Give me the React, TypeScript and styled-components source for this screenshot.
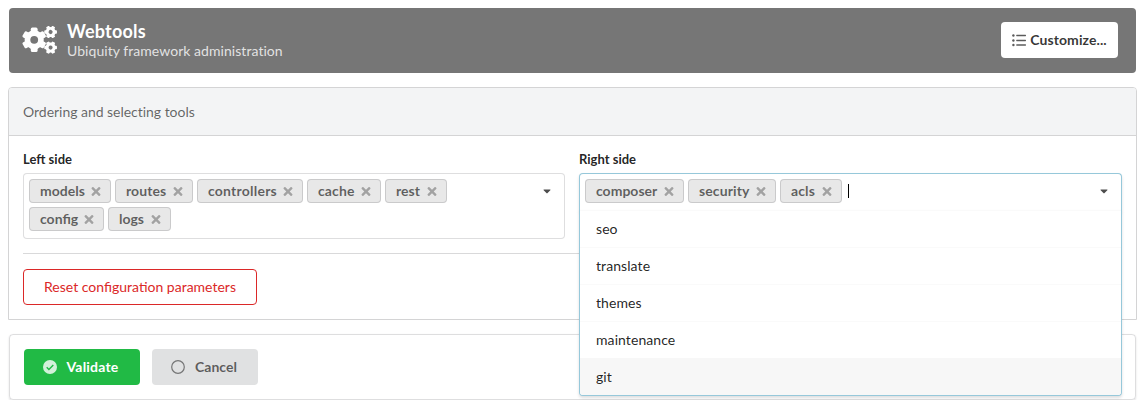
import React from "react";
import styled, { createGlobalStyle, css } from "styled-components";
import { FaTimes, FaCaretDown } from "react-icons/fa";

const GlobalStyle = createGlobalStyle`
  *, *::before, *::after { box-sizing: border-box; }
  body {
    margin: 0;
    background: #fff;
    color: rgba(0, 0, 0, 0.87);
    font: 14px/20px Lato, "Liberation Sans", sans-serif;
    overflow: hidden;
  }
`;

const Page = styled.main`
  display: flex;
  flex-direction: column;
  gap: 14px;
  padding: 8px 9px 0;
  width: 1146px;
`;

const Banner = styled.header`
  display: flex;
  align-items: center;
  height: 65px;
  width: 1127px;
  padding: 0 18px 1px 13px;
  border-radius: 4px;
  background: #767676;
  color: #fff;
`;

const BannerIcon = styled.svg`
  width: 36px;
  height: 30px;
  margin-right: 9px;
  fill: #fff;
`;

const Heading = styled.div`
  flex: 1;
  padding-bottom: 1px;
`;

const Title = styled.h1`
  margin: 0;
  font-size: 18px;
  font-weight: 700;
  line-height: 22px;
  letter-spacing: 0.2px;
`;

const Subtitle = styled.div`
  font-size: 14px;
  line-height: 17px;
  letter-spacing: 0.05px;
  color: rgba(255, 255, 255, 0.8);
`;

const Button = styled.button<{ $kind: "plain" | "positive" | "neutral" | "danger" }>`
  display: inline-flex;
  align-items: center;
  justify-content: center;
  height: 36px;
  padding: 0;
  border: 0;
  border-radius: 4px;
  font: 700 14px/14px Lato, "Liberation Sans", sans-serif;
  ${({ $kind }) =>
    $kind === "plain" &&
    css`
      width: 117px;
      gap: 4px;
      background: #fff;
      color: rgba(0, 0, 0, 0.8);
      letter-spacing: 0.08px;
    `}
  ${({ $kind }) =>
    $kind === "positive" &&
    css`
      width: 116px;
      gap: 10px;
      padding-right: 3px;
      background: #21ba45;
      color: #fff;
      letter-spacing: 0.2px;
    `}
  ${({ $kind }) =>
    $kind === "neutral" &&
    css`
      width: 106px;
      gap: 10px;
      padding-right: 2px;
      background: #e0e1e2;
      color: rgba(0, 0, 0, 0.6);
    `}
  ${({ $kind }) =>
    $kind === "danger" &&
    css`
      width: 234px;
      border: 1px solid #db2828;
      background: #fff;
      color: #db2828;
      font-weight: 400;
    `}
`;

const ButtonIcon = styled.svg`
  width: 14px;
  height: 14px;
  opacity: 0.8;
`;

const Panel = styled.section`
  width: 1129px;
  height: 233px;
  margin-left: -1px;
  border: 1px solid #d4d4d5;
  border-radius: 4px 4px 0 0;
`;

const PanelHeader = styled.div`
  height: 48px;
  padding: 14px;
  border-bottom: 1px solid #d4d4d5;
  border-radius: 3px 3px 0 0;
  background: #f3f4f5;
  color: rgba(0, 0, 0, 0.6);
  letter-spacing: -0.03px;
`;

const PanelBody = styled.div`
  padding: 13px 14px 0;
`;

const Fields = styled.div`
  display: grid;
  grid-template-columns: 542px 543px;
  column-gap: 14px;
  height: 91px;
`;

const FieldLabel = styled.div`
  height: 24px;
  padding-top: 1px;
  font-size: 13px;
  font-weight: 700;
  line-height: 19px;
`;

const Select = styled.div<{ $open?: boolean }>`
  position: relative;
  display: flex;
  justify-content: space-between;
  height: ${({ $open }) => ($open ? 38 : 66)}px;
  padding: 5px 13px 0 5px;
  border: 1px solid ${({ $open }) => ($open ? "#96c8da" : "rgba(34, 36, 38, 0.15)")};
  border-bottom-color: ${({ $open }) => ($open ? "transparent" : "rgba(34, 36, 38, 0.15)")};
  border-radius: ${({ $open }) => ($open ? "4px 4px 0 0" : "4px")};
  background: #fff;
  box-shadow: ${({ $open }) => ($open ? "0 2px 3px rgba(34, 36, 38, 0.15)" : "none")};
`;

const Tags = styled.div`
  display: flex;
  flex-wrap: wrap;
  align-content: flex-start;
  gap: 4px;
  width: 440px;
`;

const Tag = styled.span<{ $width: number; $tracking: number }>`
  display: inline-flex;
  align-items: center;
  justify-content: space-between;
  width: ${({ $width }) => $width}px;
  height: 24px;
  padding: 0 10px 0 11px;
  border-radius: 4px;
  background: #e8e8e8;
  box-shadow: inset 0 0 0 1px rgba(34, 36, 38, 0.15);
  color: rgba(0, 0, 0, 0.6);
  font-weight: 700;
  line-height: 14px;
  letter-spacing: ${({ $tracking }) => $tracking}px;
`;

const Remove = styled(FaTimes)`
  flex: none;
  width: 10px;
  height: 13px;
  opacity: 0.5;
`;

const Caret = styled(FaCaretDown)`
  width: 8px;
  height: 12px;
  margin-top: 6px;
  opacity: 0.8;
`;

const Cursor = styled.span`
  width: 1px;
  height: 14px;
  margin: 5px 0 0 2px;
  background: #000;
`;

const Menu = styled.div`
  position: absolute;
  z-index: 2;
  top: 36px;
  left: -1px;
  width: 543px;
  height: 186px;
  border: 1px solid #96c8da;
  border-top: 0;
  border-radius: 0 0 4px 4px;
  background: #fff;
  box-shadow: 0 2px 3px rgba(34, 36, 38, 0.15);
  overflow: hidden;
`;

const Option = styled.div<{ $selected?: boolean }>`
  height: 37px;
  padding: 10px 16px;
  border-top: 1px solid ${({ $selected }) => ($selected ? "#f7f7f7" : "#fafafa")};
  background: ${({ $selected }) => ($selected ? "#f7f7f7" : "#fff")};
  line-height: 15px;
  letter-spacing: 0.08px;
`;

const Divider = styled.div`
  height: 1px;
  margin: 13px 0 15px;
  background: #d9d9da;
`;

const Actions = styled.section`
  display: flex;
  gap: 12px;
  width: 1127px;
  height: 66px;
  padding: 14px;
  border: 1px solid rgba(34, 36, 38, 0.15);
  border-radius: 4px;
  box-shadow: 0 1px 2px rgba(34, 36, 38, 0.15);
`;

type Tool = { name: string; width: number; tracking?: number };

const leftTools: Tool[] = [
  { name: "models", width: 82 },
  { name: "routes", width: 78, tracking: 0.1 },
  { name: "controllers", width: 106, tracking: 0.22 },
  { name: "cache", width: 74, tracking: 0.1 },
  { name: "rest", width: 62 },
  { name: "config", width: 75 },
  { name: "logs", width: 63 },
];
const rightTools: Tool[] = [
  { name: "composer", width: 99 },
  { name: "security", width: 88, tracking: 0.12 },
  { name: "acls", width: 62, tracking: 0.1 },
];
const availableTools = ["seo", "translate", "themes", "maintenance", "git"];

const ToolTag = ({ name, width, tracking = 0 }: Tool) => (
  <Tag $width={width} $tracking={tracking}>
    {name}
    <Remove />
  </Tag>
);

// A six-toothed wheel: crossed rounded bars under a disc, with the hub masked out.
const Gear = ({ id, x, y, size, turn = 0 }: { id: string; x: number; y: number; size: number; turn?: number }) => (
  <g transform={`translate(${x} ${y}) rotate(${turn}) scale(${size})`}>
    <mask id={id} maskUnits="userSpaceOnUse" x="-14" y="-14" width="28" height="28">
      <rect x="-14" y="-14" width="28" height="28" fill="#fff" />
      <circle r="3.9" fill="#000" />
    </mask>
    <g mask={`url(#${id})`}>
      <circle r="9.6" />
      {[0, 60, 120].map((angle) => (
        <rect key={angle} x="-3.4" y="-12.2" width="6.8" height="24.4" rx="1.6" transform={`rotate(${angle})`} />
      ))}
    </g>
  </g>
);

export default function App() {
  return (
    <>
      <GlobalStyle />
      <Page>
        <Banner>
          <BannerIcon viewBox="0 0 36 30">
            <Gear id="hub-large" x={12.2} y={14.8} size={1} />
            <Gear id="hub-top" x={28.6} y={7} size={0.52} turn={30} />
            <Gear id="hub-bottom" x={28.6} y={22.6} size={0.52} turn={30} />
          </BannerIcon>
          <Heading>
            <Title>Webtools</Title>
            <Subtitle>Ubiquity framework administration</Subtitle>
          </Heading>
          <Button $kind="plain">
            <ButtonIcon viewBox="0 0 14 14" fill="currentColor">
              {[2.5, 7.5, 12].map((y) => (
                <g key={y}>
                  <circle cx="1.4" cy={y} r="1.2" />
                  <rect x="4.2" y={y - 0.75} width="9.8" height="1.5" rx="0.4" />
                </g>
              ))}
            </ButtonIcon>
            Customize...
          </Button>
        </Banner>
        <Panel>
          <PanelHeader>Ordering and selecting tools</PanelHeader>
          <PanelBody>
            <Fields>
              <div>
                <FieldLabel>Left side</FieldLabel>
                <Select>
                  <Tags>
                    {leftTools.map((tool) => (
                      <ToolTag key={tool.name} {...tool} />
                    ))}
                  </Tags>
                  <Caret />
                </Select>
              </div>
              <div>
                <FieldLabel>Right side</FieldLabel>
                <Select $open>
                  <Tags>
                    {rightTools.map((tool) => (
                      <ToolTag key={tool.name} {...tool} />
                    ))}
                    <Cursor />
                  </Tags>
                  <Caret />
                  <Menu>
                    {availableTools.map((name) => (
                      <Option key={name} $selected={name === "git"}>
                        {name}
                      </Option>
                    ))}
                  </Menu>
                </Select>
              </div>
            </Fields>
            <Divider />
            <Button $kind="danger">Reset configuration parameters</Button>
          </PanelBody>
        </Panel>
        <Actions>
          <Button $kind="positive">
            <ButtonIcon viewBox="0 0 14 14">
              <circle cx="7" cy="7" r="7" fill="#fff" />
              <path d="M3.7 7.3l2.2 2.2 4.4-4.5" fill="none" stroke="#21ba45" strokeWidth="1.4" />
            </ButtonIcon>
            Validate
          </Button>
          <Button $kind="neutral">
            <ButtonIcon viewBox="0 0 14 14">
              <circle cx="7" cy="7" r="6.3" fill="none" stroke="currentColor" strokeWidth="1.2" />
            </ButtonIcon>
            Cancel
          </Button>
        </Actions>
      </Page>
    </>
  );
}
